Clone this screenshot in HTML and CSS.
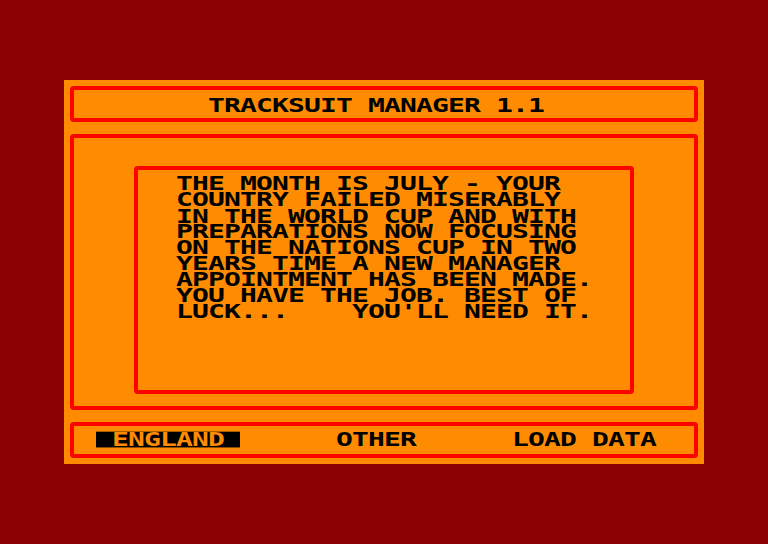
FILE: index.html
```html
<!DOCTYPE html>
<html lang="en">
<head>
    <meta charset="UTF-8">
    <meta name="viewport" content="width=device-width, initial-scale=1.0">
    <title>Tracksuit Manager</title>
    <link rel="stylesheet" href="styles.css">
</head>
<body>
    <div class="screen">
        <!-- Title bar -->
        <header class="box title">
            <span class="txt">TRACKSUIT MANAGER 1.1</span>
        </header>

        <!-- Intro message -->
        <main class="box story">
            <div class="message">
                <p class="txt">THE MONTH IS JULY - YOUR
COUNTRY FAILED MISERABLY
IN THE WORLD CUP AND WITH
PREPARATIONS NOW FOCUSING
ON THE NATIONS CUP IN TWO
YEARS TIME A NEW MANAGER
APPOINTMENT HAS BEEN MADE.
YOU HAVE THE JOB. BEST OF
LUCK...    YOU'LL NEED IT.</p>
            </div>
        </main>

        <!-- Team choice -->
        <nav class="box menu">
            <span class="txt selected"> ENGLAND </span>
            <span class="txt">OTHER</span>
            <span class="txt">LOAD DATA</span>
        </nav>
    </div>
</body>
</html>
```

FILE: styles.css
```css
body {
    margin: 0;
    padding-top: 80px;
    height: 544px;
    box-sizing: border-box;
    background-color: #8b0000; /* bordo scuro */
}
.screen {
    width: 640px;
    height: 384px;
    margin: 0 auto;
    padding: 6px;
    box-sizing: border-box;
    background-color: #ff8c00;
    display: flex;
    flex-direction: column;
    gap: 12px;
}
.box {
    border: 4px solid #ff0000;
    border-radius: 4px;
    box-sizing: border-box;
}
/* testo stile 8-bit: caratteri ogni 16px, schiacciati in verticale */
.txt {
    display: inline-block;
    margin: 0;
    font-family: "DejaVu Sans Mono", monospace;
    font-weight: bold;
    font-size: 28px;
    letter-spacing: -0.86px;
    line-height: 23.3px;
    white-space: pre;
    color: #000;
    transform: scaleY(0.686);
}
.title {
    height: 36px;
    display: flex;
    align-items: center;
    padding: 3px 0 0 134px;
}
.story {
    flex: 1;
    display: flex;
    padding: 28px 60px 12px;
}
.message {
    flex: 1;
    border: 4px solid #ff0000;
    border-radius: 4px;
    padding: 6px 0 0 38px;
}
.message .txt {
    transform-origin: top left;
}
.menu {
    height: 36px;
    display: flex;
    align-items: center;
    gap: 96px;
    padding-left: 22px;
}
.selected {
    background-color: #000;
    color: #ff8c00;
}
```
